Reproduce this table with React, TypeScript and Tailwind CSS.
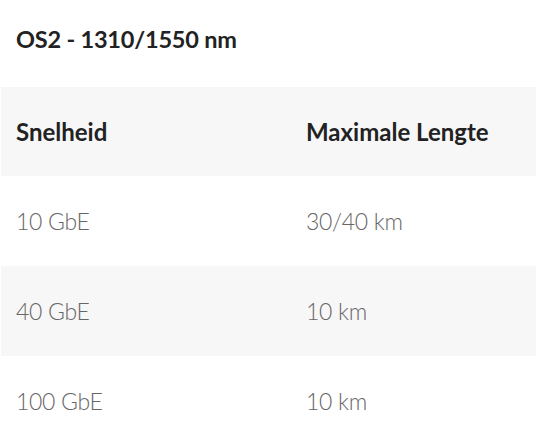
const rows = [
  { speed: '10 GbE', length: '30/40 km' },
  { speed: '40 GbE', length: '10 km' },
  { speed: '100 GbE', length: '10 km' },
];

export default function App() {
  return (
    <div className="min-h-screen bg-white font-['Lato',sans-serif]">
      <h2 className="h-[87px] flex items-center pl-4 pb-2 text-[23.5px] font-bold text-[#222] tracking-[-0.2px]">
        OS2 - 1310/1550 nm
      </h2>
      <div className="ml-px w-[535px]">
        <div className="grid grid-cols-[290px_1fr] h-[89px] items-center bg-[#f7f7f7] text-[24px] font-bold text-[#222]">
          <div className="pl-[15px]">Snelheid</div>
          <div className="pl-[15px]">Maximale Lengte</div>
        </div>
        {rows.map((row, i) => (
          <div
            key={row.speed}
            className={`grid grid-cols-[290px_1fr] h-[90px] items-center text-[23px] font-light text-[#666] tracking-[-0.3px] ${i % 2 === 1 ? 'bg-[#f7f7f7]' : 'bg-white'}`}
          >
            <div className="pl-[15px]">{row.speed}</div>
            <div className="pl-[15px]">{row.length}</div>
          </div>
        ))}
      </div>
    </div>
  );
}
